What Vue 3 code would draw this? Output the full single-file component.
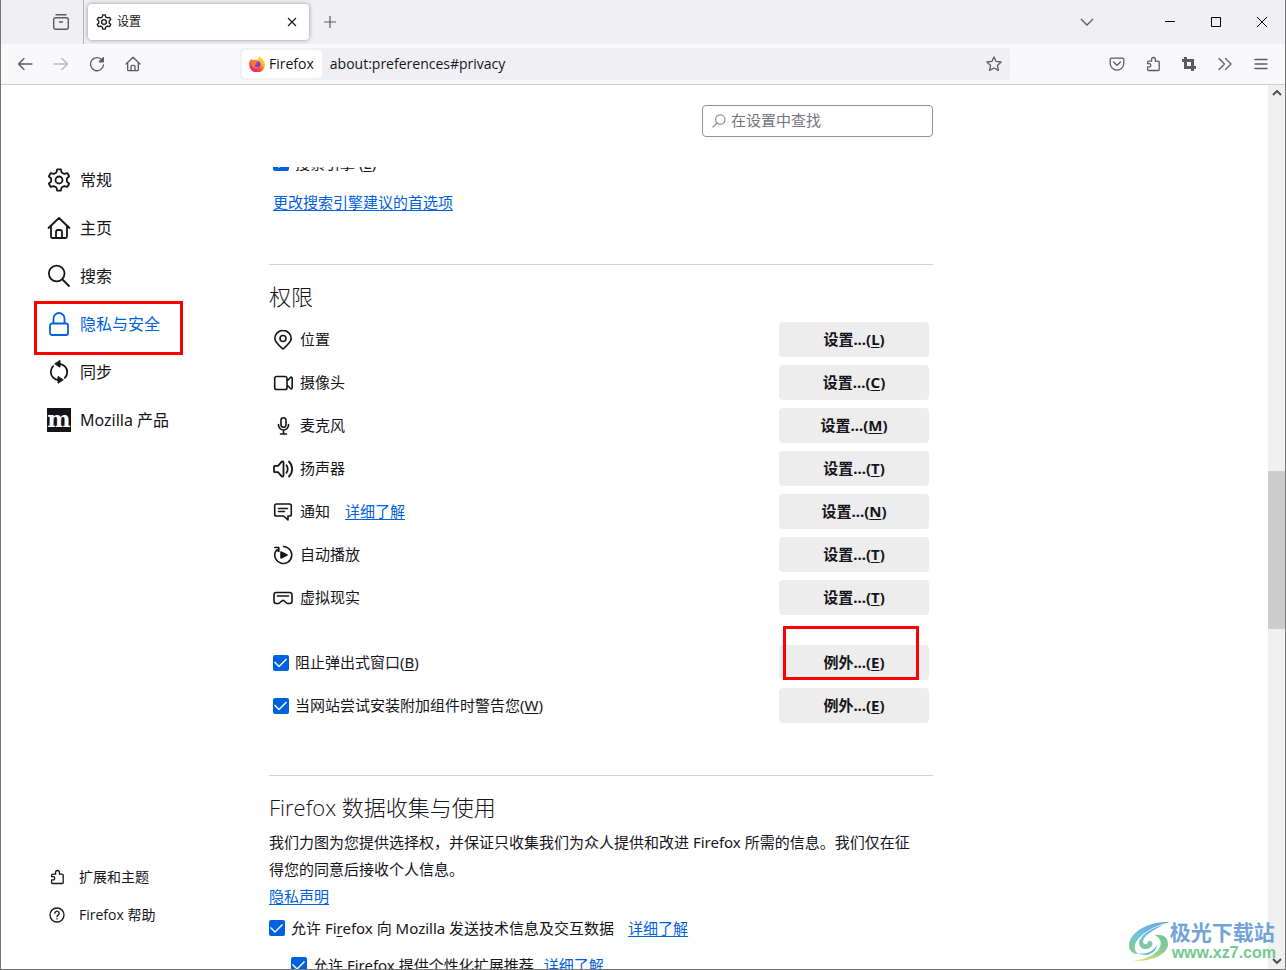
<script setup>
import { ref } from 'vue'

function gearPath(c, outer, inner) {
  const points = []
  const at = (deg, r) => {
    const a = (deg * Math.PI) / 180
    points.push(`${(c + r * Math.cos(a)).toFixed(2)} ${(c + r * Math.sin(a)).toFixed(2)}`)
  }
  for (let k = 0; k < 6; k++) {
    const t = -90 + k * 60
    at(t - 19, inner)
    at(t - 10, outer)
    at(t + 10, outer)
    at(t + 19, inner)
  }
  return `M${points.join('L')}Z`
}

const gear = gearPath(12, 10.8, 8)
const puzzle =
  'M3.600 5.200h3V3.400a1.900 1.900 0 0 1 3.800 0v1.800h2.800a1 1 0 0 1 1 1v7.300a1 1 0 0 1-1 1H3.600a1 1 0 0 1-1-1v-2.600h1.600a1.600 1.600 0 0 0 0-3.200H2.600V6.200a1 1 0 0 1 1-1z'
const home = 'M1.500 12 12 2l10.500 10M4 10v10.500a1.500 1.500 0 0 0 1.500 1.500h13a1.500 1.500 0 0 0 1.500-1.500V10M9 22v-6a2 2 0 0 1 2-2h2a2 2 0 0 1 2 2v6'

const categories = [
  { id: 'general', label: '常规' },
  { id: 'home', label: '主页' },
  { id: 'search', label: '搜索' },
  { id: 'privacy', label: '隐私与安全' },
  { id: 'sync', label: '同步' },
  { id: 'mozilla', label: 'Mozilla 产品' },
]

const permissions = [
  { id: 'geo', label: '位置', key: 'L' },
  { id: 'camera', label: '摄像头', key: 'C' },
  { id: 'mic', label: '麦克风', key: 'M' },
  { id: 'speaker', label: '扬声器', key: 'T' },
  { id: 'notify', label: '通知', key: 'N', more: true },
  { id: 'autoplay', label: '自动播放', key: 'T' },
  { id: 'vr', label: '虚拟现实', key: 'T' },
]

const engines = ref(true)
const popups = ref(true)
const addons = ref(true)
const telemetry = ref(true)
const recommend = ref(true)
</script>

<template>
  <div class="window">
    <header class="tabs">
      <button class="view" aria-label="Firefox View">
        <svg width="18" height="18" viewBox="0 0 18 18" fill="none" stroke="#5b5b66" stroke-width="1.400" stroke-linecap="round">
          <path d="M4 1.700h10" /><rect x="1.700" y="4.700" width="14.600" height="11.600" rx="2" /><path d="M7.500 9h3" />
        </svg>
      </button>
      <div class="tab">
        <svg width="16" height="16" viewBox="0 0 24 24" fill="none" stroke="#15141a" stroke-width="2" stroke-linejoin="round">
          <path :d="gear" /><circle cx="12" cy="12" r="3.600" />
        </svg>
        <span class="tab-title">设置</span>
        <button class="tab-close" aria-label="关闭标签页">
          <svg width="10" height="10" viewBox="0 0 10 10" stroke="#15141a" stroke-width="1.100"><path d="M1 1l8 8M9 1l-8 8" /></svg>
        </button>
      </div>
      <button class="new-tab" aria-label="新建标签页">
        <svg width="12" height="12" viewBox="0 0 12 12" stroke="#5b5b66" stroke-width="1.200"><path d="M6 0v12M0 6h12" /></svg>
      </button>
      <button class="all-tabs" aria-label="列出所有标签页">
        <svg width="14" height="8" viewBox="0 0 14 8" fill="none" stroke="#5b5b66" stroke-width="1.300"><path d="M1 1l6 6 6-6" /></svg>
      </button>
      <button class="caption" aria-label="最小化">
        <svg width="10" height="10" viewBox="0 0 10 10" stroke="#000"><path d="M0 4.500h10" /></svg>
      </button>
      <button class="caption" aria-label="最大化">
        <svg width="10" height="10" viewBox="0 0 10 10" fill="none" stroke="#000"><path d="M.5.5h9v9h-9z" /></svg>
      </button>
      <button class="caption" aria-label="关闭">
        <svg width="10" height="10" viewBox="0 0 10 10" stroke="#000"><path d="M0 0l10 10M10 0L0 10" /></svg>
      </button>
    </header>

    <div class="toolbar">
      <button class="tool" aria-label="后退">
        <svg width="16" height="16" viewBox="0 0 16 16"><path d="M15 8H1.500M7 2.500L1.500 8 7 13.500" /></svg>
      </button>
      <button class="tool dim" aria-label="前进" disabled>
        <svg width="16" height="16" viewBox="0 0 16 16"><path d="M1 8h13.500M9 2.500L14.500 8 9 13.500" /></svg>
      </button>
      <button class="tool" aria-label="刷新">
        <svg width="16" height="16" viewBox="0 0 16 16"><path d="M13 4A6.500 6.500 0 1 0 14.500 9" /><path d="M14.300 1.800v4H10.300z" fill="#5b5b66" /></svg>
      </button>
      <button class="tool" aria-label="主页">
        <svg width="16" height="16" viewBox="0 0 24 24"><path :d="home" /></svg>
      </button>
      <div class="spacer"></div>
      <div class="urlbar">
        <span class="identity">
          <svg width="16" height="16" viewBox="0 0 16 16" aria-hidden="true">
            <defs>
              <linearGradient id="fox" x1="0.850" y1="0.050" x2="0.200" y2="0.950">
                <stop offset="0" stop-color="#fff14a" /><stop offset="0.350" stop-color="#ffb01f" />
                <stop offset="0.650" stop-color="#ff4a3d" /><stop offset="1" stop-color="#e9147f" />
              </linearGradient>
              <linearGradient id="globe" x1="0" y1="0" x2="1" y2="1">
                <stop offset="0" stop-color="#9a4dff" /><stop offset="1" stop-color="#5a3ad0" />
              </linearGradient>
            </defs>
            <path d="M10.300 0c1 1.400 2.600 2 3.900 3.900C15.400 5.300 16 7 15.900 8.800A7.800 7.800 0 0 1 .3 8.700C.2 6.300 1 4.200 2.200 2.700c.1.700.3 1.100.7 1.400.8-.4 1.900-.4 2.900-.2C7 3.300 8.600 3.300 9.500 3.600 9.200 2.400 9.500 1 10.300 0z" fill="url(#fox)" />
            <circle cx="8.300" cy="8.200" r="3.100" fill="url(#globe)" />
            <path d="M2.500 4.700c1.500-.8 3.300-.3 4.100.7 1 .2 2 .1 2.200.4-.2.900-1.700 1.100-1.900 1.700.2 1.400-1.300 1.100-1.500 1.900.5 1.900 2.900 2 4.400 1.300-1.300 2.300-5.600 2-6.800-.7-.7-1.700-.9-3.600-.5-5.300z" fill="#ff7a2e" />
          </svg>
          Firefox
        </span>
        <input class="address" type="text" value="about:preferences#privacy" aria-label="地址" />
        <button class="star" aria-label="添加书签">
          <svg width="16" height="16" viewBox="0 0 16 16" fill="none" stroke="#5b5b66" stroke-width="1.300" stroke-linejoin="round">
            <path d="M8 .9l2.100 4.500 5 .6-3.700 3.400 1 5L8 12l-4.400 2.400 1-5L.9 6l5-.6z" />
          </svg>
        </button>
      </div>
      <div class="spacer"></div>
      <button class="tool" aria-label="Pocket">
        <svg width="16" height="16" viewBox="0 0 16 16"><path d="M2.500 2.200h11A1.300 1.300 0 0 1 14.800 3.500v3.800a6.800 6.800 0 0 1-13.600 0V3.500a1.300 1.300 0 0 1 1.300-1.300zM4.500 6L8 9.300 11.500 6" /></svg>
      </button>
      <button class="tool" aria-label="扩展">
        <svg width="16" height="16" viewBox="0 0 16 16"><path :d="puzzle" /></svg>
      </button>
      <button class="tool" aria-label="截图">
        <svg width="16" height="16" viewBox="0 0 16 16"><path d="M4.500 1v10.500H15M1 4.500h10.500V15" stroke-width="3" stroke-linecap="butt" stroke-linejoin="miter" /></svg>
      </button>
      <button class="tool" aria-label="更多工具">
        <svg width="16" height="16" viewBox="0 0 16 16"><path d="M2 2.500L7.500 8 2 13.500M8.500 2.500L14 8l-5.500 5.500" /></svg>
      </button>
      <button class="tool" aria-label="应用程序菜单">
        <svg width="16" height="16" viewBox="0 0 16 16"><path d="M2 3.500h12M2 8h12M2 12.500h12" /></svg>
      </button>
    </div>

    <div class="page">
      <aside class="sidebar">
        <nav class="categories">
          <a v-for="c in categories" :key="c.id" href="#" class="category" :class="{ selected: c.id === 'privacy' }">
            <span v-if="c.id === 'mozilla'" class="moz" aria-hidden="true">m</span>
            <svg v-else width="24" height="24" viewBox="0 0 24 24" class="line-icon">
              <template v-if="c.id === 'general'"><path :d="gear" /><circle cx="12" cy="12" r="3.500" /></template>
              <path v-else-if="c.id === 'home'" :d="home" />
              <path v-else-if="c.id === 'search'" d="M16 16l6 6M17.500 9.500a7.800 7.800 0 1 1-15.600 0 7.800 7.800 0 0 1 15.600 0z" />
              <path v-else-if="c.id === 'privacy'" d="M5 11.500h14a2 2 0 0 1 2 2V21a2 2 0 0 1-2 2H5a2 2 0 0 1-2-2v-7.500a2 2 0 0 1 2-2zM6.500 11.500V6.500a5.500 5.500 0 0 1 11 0v5" />
              <template v-else>
                <path d="M12 4c4.800.2 8.200 3.600 8.200 8 0 2.500-1 4.500-2.400 5.800M12 20c-4.800-.2-8.200-3.600-8.200-8 0-2.500 1-4.500 2.400-5.800" />
                <path d="M13 .8v6.400L8 4zM11 16.800v6.400l5-3.200z" fill="currentColor" stroke-width="1" />
              </template>
            </svg>
            <span>{{ c.label }}</span>
            <span v-if="c.id === 'privacy'" class="mark mark-nav"></span>
          </a>
        </nav>
        <nav class="extras">
          <a href="#" class="extra">
            <svg width="16" height="16" viewBox="0 0 16 16" class="line-icon thin"><path :d="puzzle" /></svg>
            <span>扩展和主题</span>
          </a>
          <a href="#" class="extra">
            <svg width="16" height="16" viewBox="0 0 16 16" class="line-icon thin">
              <circle cx="8" cy="8" r="7" /><path d="M5.900 6.300a2.100 2.100 0 1 1 3.200 1.800C8.300 8.600 8 8.900 8 9.700M8 11.700v.2" />
            </svg>
            <span>Firefox 帮助</span>
          </a>
        </nav>
      </aside>

      <main class="main">
        <div class="sticky">
          <label class="finder">
            <svg width="14" height="14" viewBox="0 0 14 14" fill="none" stroke="#8f8f9d" stroke-width="1.200" stroke-linecap="round">
              <circle cx="8.300" cy="5.500" r="4.700" /><path d="M5 9l-4 4" />
            </svg>
            <input type="search" placeholder="在设置中查找" aria-label="在设置中查找" />
          </label>
        </div>

        <div class="pane">
          <section class="suggest">
            <label class="check"><input v-model="engines" type="checkbox" /><span>搜索引擎 (<u>E</u>)</span></label>
            <a href="#" class="suggest-link">更改搜索引擎建议的首选项</a>
          </section>

          <section class="group">
            <h2>权限</h2>
            <div class="rows">
              <div v-for="p in permissions" :key="p.id" class="row">
                <svg width="20" height="20" viewBox="0 0 20 20" class="line-icon perm">
                  <template v-if="p.id === 'geo'"><path d="M10 19C6 15.500 1.800 12 1.800 8.500a8.200 8 0 0 1 16.400 0C18.200 12 14 15.500 10 19z" /><circle cx="10" cy="8.500" r="3" /></template>
                  <path v-else-if="p.id === 'camera'" d="M3.500 3.500h8.800A1.800 1.800 0 0 1 14 5.300v9.400a1.800 1.800 0 0 1-1.800 1.800H3.500a1.800 1.800 0 0 1-1.800-1.800V5.300a1.800 1.800 0 0 1 1.800-1.800zM14 8l3.500-3.500c.8-.7 1.700-.3 1.700.7v9.600c0 1-.9 1.400-1.700.7L14 12" />
                  <path v-else-if="p.id === 'mic'" d="M10.500 1.700a2.500 2.500 0 0 1 2.500 2.500v4.600a2.500 2.500 0 0 1-5 0V4.200a2.500 2.500 0 0 1 2.500-2.500zM5.500 8.500v.5a5 5 0 0 0 10 0v-.5M10.500 14v4M7.500 18h6" />
                  <path v-else-if="p.id === 'speaker'" d="M1 7.800a1 1 0 0 1 1-1h3l3.500-4c.8-.9 2-.5 2 .8v12.800c0 1.300-1.200 1.700-2 .8l-3.500-4H2a1 1 0 0 1-1-1zM13.500 6.300c1.600 2 1.600 5.400 0 7.400M16 2.500c4.200 4 4.200 11 0 15" stroke-width="1.800" />
                  <path v-else-if="p.id === 'notify'" d="M3.500 2h13a1.800 1.800 0 0 1 1.800 1.800v8.400a1.800 1.800 0 0 1-1.800 1.800H15v4l-4.500-4h-7a1.800 1.800 0 0 1-1.800-1.800V3.800A1.800 1.800 0 0 1 3.500 2zM5.500 6.500h9M5.500 9.500h6" />
                  <template v-else-if="p.id === 'autoplay'">
                    <path d="M10.500 1.500A8.500 8.500 0 1 1 2.300 7" />
                    <path d="M1.800 2.500h4v4L4.200 4.900 2.800 6.400" stroke-width="1.600" />
                    <path d="M8 7l6 3-6 3z" fill="currentColor" />
                  </template>
                  <path v-else d="M3.200 4.500h13.600A2.200 2.200 0 0 1 19 6.700v6.600a2.200 2.200 0 0 1-2.200 2.200h-2.600L11 12.800a1.500 1.500 0 0 0-2 0l-3.200 2.700H3.200A2.200 2.200 0 0 1 1 13.300V6.700a2.200 2.200 0 0 1 2.200-2.200zM4.500 8h11" />
                </svg>
                <span class="perm-label">{{ p.label }}</span>
                <a v-if="p.more" href="#" class="more">详细了解</a>
                <button class="action">设置...(<u>{{ p.key }}</u>)</button>
              </div>
            </div>
            <div class="rows exceptions">
              <div class="row">
                <label class="check"><input v-model="popups" type="checkbox" /><span>阻止弹出式窗口(<u>B</u>)</span></label>
                <button class="action">例外...(<u>E</u>)<span class="mark mark-button"></span></button>
              </div>
              <div class="row">
                <label class="check"><input v-model="addons" type="checkbox" /><span>当网站尝试安装附加组件时警告您(<u>W</u>)</span></label>
                <button class="action">例外...(<u>E</u>)</button>
              </div>
            </div>
          </section>

          <section class="group data">
            <h2>Firefox 数据收集与使用</h2>
            <p>我们力图为您提供选择权，并保证只收集我们为众人提供和改进 Firefox 所需的信息。我们仅在征得您的同意后接收个人信息。</p>
            <a href="#" class="notice">隐私声明</a>
            <div class="option">
              <label class="check"><input v-model="telemetry" type="checkbox" /><span>允许 Fi<u>r</u>efox 向 Mozilla 发送技术信息及交互数据</span></label>
              <a href="#">详细了解</a>
            </div>
            <div class="option nested">
              <label class="check"><input v-model="recommend" type="checkbox" /><span>允许 Firefox 提供个性化扩展推荐</span></label>
              <a href="#">详细了解</a>
            </div>
          </section>
        </div>
      </main>

      <div class="scrollbar" aria-hidden="true">
        <svg width="10" height="6" viewBox="0 0 10 6" fill="none" stroke="#505050" stroke-width="2"><path d="M1 5l4-4 4 4" /></svg>
        <div class="track"><div class="thumb"></div></div>
        <svg width="10" height="6" viewBox="0 0 10 6" fill="none" stroke="#505050" stroke-width="2"><path d="M1 1l4 4 4-4" /></svg>
      </div>
    </div>

    <div class="brand">
      <svg width="42" height="42" viewBox="0 0 42 42" aria-hidden="true">
        <defs>
          <linearGradient id="swirl" x1="0.800" y1="0" x2="0.300" y2="1">
            <stop offset="0" stop-color="#5aa0e0" /><stop offset="0.550" stop-color="#6cc0dc" /><stop offset="1" stop-color="#7cc88c" />
          </linearGradient>
          <linearGradient id="tail" x1="0.700" y1="0" x2="0.200" y2="1">
            <stop offset="0" stop-color="#6cc493" /><stop offset="0.600" stop-color="#8fd08a" /><stop offset="1" stop-color="#efe36a" />
          </linearGradient>
        </defs>
        <path d="M42 1C24 0 2 9 1 24c0 6 4 9 9 9-5-4-4-11 1-16C17 10 29 4 42 1z" fill="url(#swirl)" />
        <path d="M35 4C23 7 12 14 11 22c0 6 8 8 12 4 3-3 1-7-3-6 1 3-4 5-5 1 0-6 10-12 20-17z" fill="url(#swirl)" />
        <path d="M27 14c7-1 13 2 13 9 0 10-16 18-35 17 14-2 24-7 27-14 2-5 0-9-5-12z" fill="url(#tail)" />
        <path d="M8 31c8 4 17 0 21-7 0 7-10 14-21 7z" fill="#63b6cf" />
      </svg>
      <div class="brand-text">
        <span class="brand-name">极光下载站</span>
        <span class="brand-url">www.xz7.com</span>
      </div>
    </div>
  </div>
</template>

<style>
body {
  overflow: hidden;
}
</style>

<style scoped>
* {
  box-sizing: border-box;
}
.window {
  position: relative;
  display: flex;
  flex-direction: column;
  height: 100vh;
  border: 1px solid #767676;
  border-top: 0;
  background: #fff;
  color: #15141a;
  font: 15px/20px 'Open Sans', 'Noto Sans CJK SC', sans-serif;
}
button,
input {
  padding: 0;
  border: 0;
  background: none;
  color: inherit;
  font: inherit;
}
button {
  display: flex;
  align-items: center;
  justify-content: center;
}
svg {
  flex: none;
}
a {
  color: #0061e0;
  text-underline-offset: 2px;
}
u {
  text-underline-offset: 2px;
}
.tabs {
  display: flex;
  flex: none;
  align-items: center;
  height: 44px;
  background: #f0f0f4;
}
.view {
  width: 83px;
  height: 44px;
  padding-left: 37px;
  border-right: 1px solid #b5b5ba;
}
.tab {
  display: flex;
  align-items: center;
  width: 221px;
  height: 36px;
  margin-left: 4px;
  padding: 0 8px;
  border-radius: 4px;
  background: #fff;
  box-shadow: 0 0 4px rgba(0, 0, 0, 0.4);
}
.tab-title {
  flex: 1;
  margin-left: 5px;
  font-size: 12px;
}
.tab-close {
  width: 18px;
  height: 24px;
}
.new-tab {
  width: 42px;
  height: 36px;
}
.all-tabs {
  width: 36px;
  height: 36px;
  margin-left: auto;
  margin-right: 42px;
}
.caption {
  width: 46px;
  height: 44px;
}
.toolbar {
  display: flex;
  flex: none;
  align-items: center;
  height: 41px;
  padding: 0 6px;
  border-bottom: 1px solid #ccccd0;
  background: #f9f9fb;
}
.tool {
  flex: none;
  width: 36px;
  height: 32px;
}
.tool svg {
  fill: none;
  stroke: #5b5b66;
  stroke-width: 1.300;
  stroke-linecap: round;
  stroke-linejoin: round;
}
.tool svg[viewBox='0 0 24 24'] {
  stroke-width: 2;
}
.dim {
  opacity: 0.4;
}
.spacer {
  flex: 1;
}
.urlbar {
  display: flex;
  flex: 0 1 770px;
  align-items: center;
  height: 32px;
  padding: 0 8px 0 2px;
  border-radius: 4px;
  background: #f0f0f4;
}
.identity {
  display: flex;
  align-items: center;
  gap: 4px;
  height: 28px;
  padding: 0 8px 0 7px;
  border-radius: 4px;
  background: #fff;
  font-size: 14px;
}
.address {
  flex: 1;
  min-width: 0;
  margin-left: 8px;
  font-size: 14px;
}
.page {
  display: flex;
  flex: 1;
  min-height: 0;
  font-family: 'Noto Sans', 'Noto Sans CJK SC', sans-serif;
}
.sidebar {
  display: flex;
  flex: none;
  flex-direction: column;
  justify-content: space-between;
  width: 268px;
  padding: 71px 0 35px 46px;
}
.category {
  position: relative;
  display: flex;
  align-items: center;
  gap: 9px;
  height: 48px;
  color: #15141a;
  font-size: 16px;
  text-decoration: none;
}
.category.selected {
  color: #0061e0;
}
.line-icon {
  fill: none;
  stroke: currentColor;
  stroke-width: 1.800;
  stroke-linecap: round;
  stroke-linejoin: round;
}
.thin {
  stroke-width: 1.300;
}
.perm {
  stroke-width: 1.600;
}
.moz {
  width: 24px;
  height: 24px;
  background: #15141a;
  color: #fff;
  font: bold 22px/22px 'DejaVu Serif', serif;
  text-align: center;
}
.mark {
  position: absolute;
  border: 3px solid #f00;
  pointer-events: none;
}
.mark-nav {
  top: 1px;
  left: -13px;
  width: 149px;
  height: 54px;
}
.mark-button {
  right: 10px;
  bottom: 0;
  width: 136px;
  height: 54px;
}
.extra {
  display: flex;
  align-items: center;
  gap: 14px;
  height: 38px;
  padding-left: 2px;
  color: #15141a;
  font: 14px/20px 'Open Sans', 'Noto Sans CJK SC', sans-serif;
  text-decoration: none;
}
.main {
  display: flex;
  flex: 0 1 664px;
  flex-direction: column;
  min-width: 0;
}
.sticky {
  display: flex;
  flex: none;
  justify-content: flex-end;
  height: 82px;
  padding-top: 20px;
}
.finder {
  display: flex;
  align-items: center;
  gap: 5px;
  width: 231px;
  height: 32px;
  padding: 0 9px;
  border: 1px solid #8f8f9d;
  border-radius: 4px;
}
.finder input {
  flex: 1;
  min-width: 0;
  padding-bottom: 2px;
  outline: 0;
}
.finder input::placeholder {
  color: #75757e;
}
.pane {
  flex: 1;
  min-height: 0;
  overflow: hidden;
}
.suggest {
  display: flex;
  flex-direction: column;
  align-items: flex-start;
  gap: 19px;
  margin-top: -14px;
  padding: 0 4px 52px;
}
.check {
  display: flex;
  align-items: center;
  gap: 6px;
}
.check input {
  flex: none;
  width: 16px;
  height: 16px;
  margin: 0;
  border-radius: 2px;
  background: #0061e0;
  appearance: none;
}
.check input:checked::before {
  content: '';
  display: block;
  width: 16px;
  height: 16px;
  background: #fff;
  clip-path: polygon(1px 8px, 2px 7px, 6px 11px, 13px 4px, 14px 5px, 6px 13px);
}
.group {
  padding: 15px 4px 52px 0;
  border-top: 1px solid #d3d3d6;
}
h2 {
  margin: 0;
  font: 300 22px/32px 'Open Sans', 'Noto Sans CJK SC', sans-serif;
}
.rows {
  display: flex;
  flex-direction: column;
  gap: 8px;
  margin-top: 10px;
  padding-left: 4px;
}
.exceptions {
  margin-top: 30px;
}
.row {
  display: flex;
  align-items: center;
  height: 35px;
}
.row span,
.row .more {
  padding-bottom: 2px;
}
.perm-label {
  margin-left: 7px;
}
.more {
  margin-left: 15px;
}
.action {
  position: relative;
  flex: none;
  width: 150px;
  height: 35px;
  margin-left: auto;
  padding-bottom: 2px;
  border-radius: 4px;
  background: #ededee;
  font-weight: 700;
}
p {
  margin: 6px 0 0;
  padding-right: 10px;
  line-height: 27px;
}
.notice {
  line-height: 27px;
}
.option {
  display: flex;
  align-items: center;
  gap: 14px;
  margin-top: 8px;
}
.nested {
  gap: 10px;
  margin-top: 17px;
  padding-left: 22px;
}
.scrollbar {
  display: flex;
  flex-direction: column;
  align-items: center;
  width: 17px;
  margin-left: auto;
  padding: 5px 0;
  background: #f0f0f0;
}
.track {
  flex: 1;
  width: 17px;
  padding-top: 375px;
}
.thumb {
  height: 158px;
  background: #cdcdcd;
}
.brand {
  position: absolute;
  right: 9px;
  bottom: 6px;
  display: flex;
  align-items: center;
  opacity: 0.95;
}
.brand-text {
  display: flex;
  flex-direction: column;
}
.brand-name {
  color: #6a9fd8;
  font-size: 21px;
  font-weight: 700;
  line-height: 22px;
}
.brand-url {
  padding-left: 2px;
  color: #6cc88a;
  font: bold 16px/20px 'Liberation Sans', sans-serif;
}
</style>
